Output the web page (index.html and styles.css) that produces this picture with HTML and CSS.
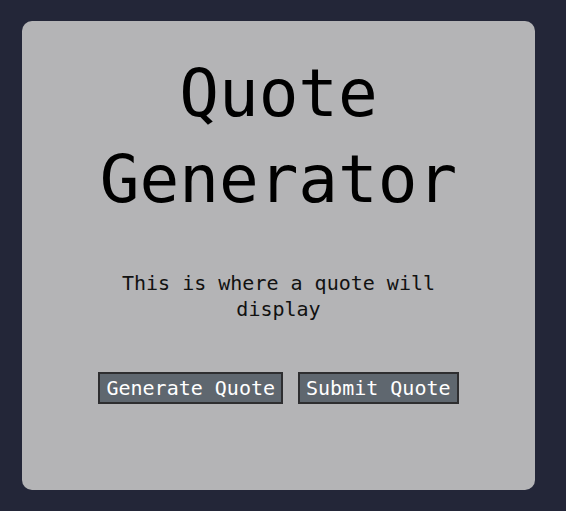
FILE: index.html
```html
<!DOCTYPE html>
<html>
<head>
<meta charset="utf-8">
<link rel="stylesheet" href="styles.css">
</head>
<body>
<main class="card">
  <h1 class="title">Quote Generator</h1>
  <p class="quote">This is where a quote will display</p>
  <div class="actions">
    <button class="btn">Generate Quote</button>
    <button class="btn">Submit Quote</button>
  </div>
</main>
</body>
</html>
```
FILE: styles.css
```css
html, body {
  margin: 0;
  height: 100%;
}
body {
  background: #232638;
  padding: 21px 31px 21px 22px;
  box-sizing: border-box;
  font-family: "DejaVu Sans Mono", monospace;
}
.card {
  background: #b4b4b6;
  border-radius: 10px;
  height: 469px;
  box-sizing: border-box;
  padding: 30px 20px 0;
  display: flex;
  flex-direction: column;
  align-items: center;
  text-align: center;
}
.title {
  margin: 0;
  font-size: 66px;
  line-height: 86px;
  font-weight: normal;
  color: #000;
  width: 380px;
}
.quote {
  margin: 47px 0 0;
  font-size: 20px;
  line-height: 26px;
  color: #111;
  width: 320px;
}
.actions {
  margin-top: 50px;
  display: flex;
  gap: 15px;
}
.btn {
  font-family: "DejaVu Sans Mono", monospace;
  font-size: 20px;
  line-height: 24px;
  padding: 2px 6px;
  background: #5f676f;
  color: #fff;
  border: 2px solid #2e2e30;
  border-radius: 0;
}
```
